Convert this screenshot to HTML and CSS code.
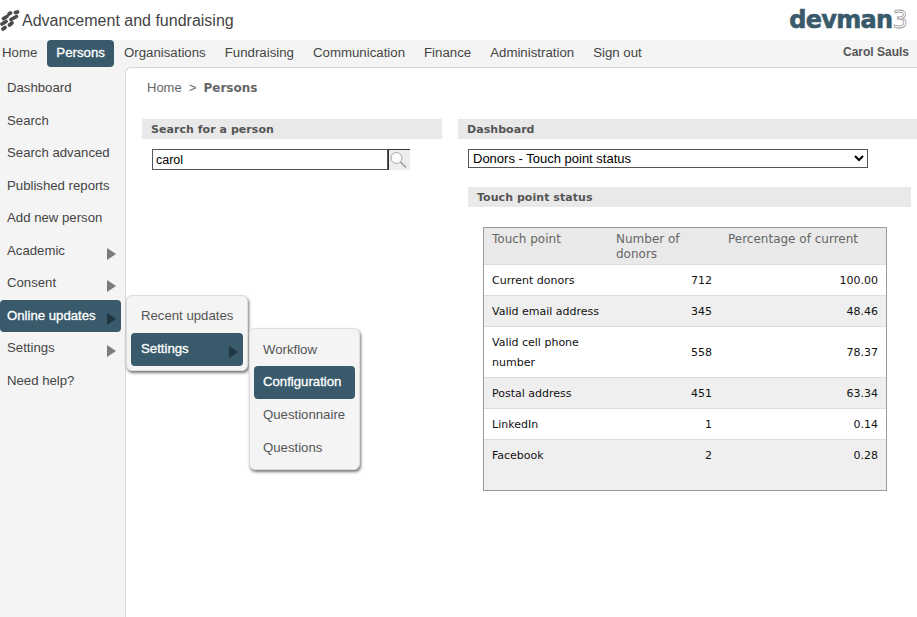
FILE: index.html
```html
<!DOCTYPE html>
<html>
<head>
  <meta charset="UTF-8">
  <title>Advancement and fundraising</title>
  <link rel="stylesheet" href="styles.css">
</head>
<body>
  <header class="top">
    <div class="brand">
      <svg class="brand-icon" width="20" height="21" viewBox="0 0 20 21">
        <g fill="none" stroke="#4a4a4a" stroke-width="3.7" stroke-linecap="round">
          <path d="M9 4 L10.5 3"/>
          <path d="M15.5 2.5 L17.5 2"/>
          <path d="M3.5 8.5 L7 6.5"/>
          <path d="M11 9.5 L16.5 6.5"/>
          <path d="M2 14 L6 11.5"/>
          <path d="M9.5 15 L12 13"/>
          <path d="M3 19 L5 17.5"/>
        </g>
      </svg>
      <span class="brand-name">Advancement and fundraising</span>
    </div>
    <div class="logo">devman<span class="logo-3">3</span></div>
  </header>

  <nav class="nav">
    <a>Home</a>
    <a class="active">Persons</a>
    <a>Organisations</a>
    <a>Fundraising</a>
    <a>Communication</a>
    <a>Finance</a>
    <a>Administration</a>
    <a>Sign out</a>
    <span class="user">Carol Sauls</span>
  </nav>

  <div class="main">
    <aside class="side">
      <ul class="side-menu">
        <li>Dashboard</li>
        <li>Search</li>
        <li>Search advanced</li>
        <li>Published reports</li>
        <li>Add new person</li>
        <li class="more">Academic</li>
        <li class="more">Consent</li>
        <li class="more active">Online updates
          <ul class="fly fly-one">
            <li>Recent updates</li>
            <li class="more active">Settings
              <ul class="fly fly-two">
                <li>Workflow</li>
                <li class="active">Configuration</li>
                <li>Questionnaire</li>
                <li>Questions</li>
              </ul>
            </li>
          </ul>
        </li>
        <li class="more">Settings</li>
        <li>Need help?</li>
      </ul>
    </aside>

    <section class="content">
      <div class="crumbs">Home <span class="sep">&gt;</span> <b>Persons</b></div>
      <div class="cols">
        <div>
          <h2 class="bar">Search for a person</h2>
          <form class="search">
            <input class="search-input" type="text" value="carol">
            <button class="search-btn" type="button">
              <svg width="21" height="20" viewBox="0 0 21 20">
                <circle cx="7.5" cy="8" r="5.5" fill="#fbfbfb" stroke="#aaa" stroke-width="1"/>
                <path d="M11.5 12 L17 17.5" stroke="#999" stroke-width="1.4"/>
              </svg>
            </button>
          </form>
        </div>
        <div>
          <h2 class="bar">Dashboard</h2>
          <div class="panel">
            <select class="report">
              <option>Donors - Touch point status</option>
            </select>
            <h3 class="bar sub">Touch point status</h3>
            <div class="table-box">
              <table class="stats">
                <thead>
                  <tr><th class="c1">Touch point</th><th class="c2">Number of donors</th><th class="c3">Percentage of current</th></tr>
                </thead>
                <tbody>
                  <tr><td>Current donors</td><td class="num">712</td><td class="num">100.00</td></tr>
                  <tr><td>Valid email address</td><td class="num">345</td><td class="num">48.46</td></tr>
                  <tr><td>Valid cell phone number</td><td class="num">558</td><td class="num">78.37</td></tr>
                  <tr><td>Postal address</td><td class="num">451</td><td class="num">63.34</td></tr>
                  <tr><td>LinkedIn</td><td class="num">1</td><td class="num">0.14</td></tr>
                  <tr><td>Facebook</td><td class="num">2</td><td class="num">0.28</td></tr>
                </tbody>
              </table>
            </div>
          </div>
        </div>
      </div>
    </section>
  </div>
</body>
</html>
```

FILE: styles.css
```css
* {
  box-sizing: border-box;
}

html, body {
  height: 100%;
}

body {
  margin: 0;
  overflow: hidden;
  display: flex;
  flex-direction: column;
  background-color: #fff;
  color: #555;
  font-family: "Liberation Sans", Arial, sans-serif;
  font-size: 13.2px;
}

ul {
  list-style: none;
  margin: 0;
  padding: 0;
}

.top {
  height: 40px;
  display: flex;
  justify-content: space-between;
  align-items: center;
}

.brand {
  display: flex;
  align-items: center;
  gap: 2px;
  padding-top: 1px;
}

.brand-name {
  font-size: 16px;
  color: #444;
}

.logo {
  margin-right: 10px;
  font-family: "DejaVu Sans", sans-serif;
  font-size: 24px;
  font-weight: bold;
  letter-spacing: -0.7px;
  color: #385a6b;
  -webkit-text-stroke: 0.6px #385a6b;
}

.logo-3 {
  font-weight: normal;
  color: #fff;
  -webkit-text-stroke: 0.8px #999;
}

.nav {
  height: 27px;
  display: flex;
  align-items: stretch;
  background-color: #f4f4f4;
  font-size: 13.25px;
}

.nav a {
  padding: 5px 9.5px 0;
  color: #444;
}

.nav a:first-child {
  padding-left: 2px;
}

.nav a.active {
  border-radius: 4px;
  background-color: #385a6b;
  color: #fff;
  -webkit-text-stroke: 0.3px #fff;
}

.user {
  margin-left: auto;
  margin-right: 8px;
  padding-top: 5px;
  font-size: 12px;
  font-weight: bold;
}

.main {
  flex: 1;
  display: flex;
  background-color: #f4f4f4;
}

.side {
  width: 125px;
  padding-top: 5px;
}

.side-menu > li,
.fly > li {
  position: relative;
  padding: 8px 7px 0;
  color: #444;
  white-space: nowrap;
}

.side-menu > li {
  width: 121px;
  height: 32.5px;
}

.side-menu li.active {
  border-radius: 4px;
  background-color: #385a6b;
  color: #fff;
  -webkit-text-stroke: 0.3px #fff;
}

.more::after {
  content: "";
  position: absolute;
  right: 5px;
  top: 13px;
  border-left: 9px solid #7c7c7c;
  border-top: 6px solid transparent;
  border-bottom: 6px solid transparent;
  -webkit-text-stroke: 0;
}

.side-menu li.active.more::after {
  border-left-color: #1f3640;
}

.fly {
  position: absolute;
  padding: 4px;
  border: 1px solid #ddd;
  border-radius: 6px;
  background-color: #f4f4f4;
  box-shadow: 1px 2px 3px #777;
  z-index: 2;
  -webkit-text-stroke: 0;
}

.fly-one {
  left: 126px;
  top: -5px;
  width: 122px;
}

.fly-two {
  left: 118px;
  top: -5px;
  width: 111px;
}

.fly > li {
  height: 33px;
  padding-left: 10px;
  color: #555;
}

.fly-two > li {
  padding-left: 9px;
}

.fly-two > li:first-child {
  padding-top: 9px;
}

.content {
  flex: 1;
  min-width: 0;
  padding-left: 16px;
  background-color: #fff;
  border-top: 1px solid #d9d9d9;
  border-left: 1px solid #d9d9d9;
  border-top-left-radius: 6px;
}

.crumbs {
  height: 51px;
  padding: 12px 0 0 5px;
  font-size: 13px;
  color: #666;
}

.crumbs b {
  font-family: "DejaVu Sans", sans-serif;
  font-size: 12px;
}

.sep {
  margin: 0 3.5px;
}

.cols {
  display: grid;
  grid-template-columns: 300px 1fr;
  gap: 16px;
}

.bar {
  margin: 0;
  height: 20px;
  padding: 4px 9px 0;
  background-color: #e9e9e9;
  font-family: "DejaVu Sans", sans-serif;
  font-size: 11px;
  font-weight: bold;
  letter-spacing: 0.05px;
  color: #555;
}

.search {
  display: flex;
  margin: 10px 0 0 10px;
}

.search-input {
  width: 236px;
  height: 21px;
  padding: 0 3px;
  border: 1px solid #555;
  font-family: "Liberation Sans", Arial, sans-serif;
  font-size: 12.5px;
  color: #000;
}

.search-btn {
  width: 22px;
  height: 21px;
  padding: 0;
  border: none;
  border-top: 1px solid #333;
  border-left: 1px solid #333;
  background-color: #ededed;
}

.panel {
  padding: 10px 6px 0 10px;
}

.report {
  display: block;
  width: 400px;
  height: 19px;
  padding: 0;
  border: 1px solid #555;
  background-color: #fff;
  font-family: "Liberation Sans", Arial, sans-serif;
  font-size: 13px;
  color: #000;
}

.sub {
  margin-top: 19px;
}

.table-box {
  width: 404px;
  height: 264px;
  margin: 20px 0 0 15px;
  border: 1px solid #999;
  background-color: #efefef;
}

.stats {
  width: 100%;
  border-collapse: collapse;
  font-family: "DejaVu Sans", sans-serif;
  font-size: 11px;
  color: #111;
}

.stats th {
  height: 36px;
  padding: 4px 8px 0;
  background-color: #e9e9e9;
  font-size: 12px;
  font-weight: normal;
  line-height: 15px;
  text-align: left;
  vertical-align: top;
  color: #666;
}

.c1 { width: 124px; }
.c2 { width: 112px; }

.stats td {
  padding: 6px 8px 4px;
  border-top: 1px solid #ddd;
  background-color: #fff;
  line-height: 20px;
}

.stats tbody tr:nth-child(even) td {
  background-color: #efefef;
}

.stats td.num {
  text-align: right;
}
```
